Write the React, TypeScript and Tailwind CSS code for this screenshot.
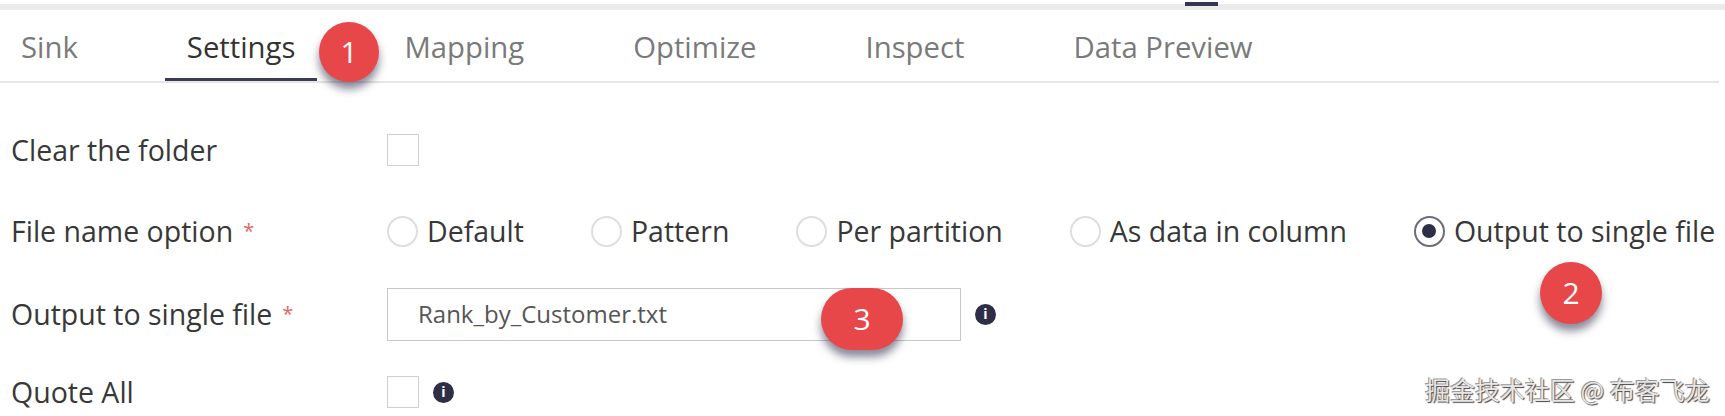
import React from "react";

const font = { fontFamily: '"Open Sans", "Noto Sans", sans-serif' };

function Badge({ n, className }: { n: string; className: string }) {
  return (
    <div
      className={`absolute flex items-center justify-center rounded-full bg-[#e8474a] text-white text-[30px] leading-none shadow-[0_7px_8px_rgba(40,40,70,0.55)] ${className}`}
    >
      {n}
    </div>
  );
}

function Checkbox() {
  return <div className="h-[32px] w-[32px] border border-[#cfcfcf]" />;
}

function Info() {
  return (
    <div className="flex h-[21px] w-[21px] items-center justify-center rounded-full bg-[#2e2f47] text-[14px] font-bold leading-none text-white">
      i
    </div>
  );
}

function Radio({ label, checked }: { label: string; checked?: boolean }) {
  return (
    <div className="flex items-center gap-[9px]">
      <div
        className={`flex h-[31px] w-[31px] items-center justify-center rounded-full border-2 ${
          checked ? "border-[#6b6b7b]" : "border-[#dedede]"
        }`}
      >
        {checked && <div className="h-[14px] w-[14px] rounded-full bg-[#2e2f47]" />}
      </div>
      <span className="whitespace-nowrap">{label}</span>
    </div>
  );
}

function Row({ label, required, h, children }: { label: string; required?: boolean; h: string; children?: React.ReactNode }) {
  return (
    <div className={`flex items-center ${h}`}>
      <div className="w-[387px] shrink-0 pl-[11px]">
        {label}
        {required && <span className="relative top-[-4px] ml-[10px] text-[20px] text-[#e06666]">*</span>}
      </div>
      {children}
    </div>
  );
}

export default function App() {
  const tabs = ["Sink", "Settings", "Mapping", "Optimize", "Inspect", "Data Preview"];
  return (
    <div className="relative h-[416px] w-[1725px] overflow-hidden bg-white text-[28.5px] text-[#383838]" style={font}>
      <div className="relative mt-[4px] h-[6px] bg-[#ebebeb]">
        <div className="absolute left-[1185px] top-[-2px] h-[4px] w-[33px] bg-[#35364f]" />
      </div>
      <div className="mr-[6px] flex h-[73px] items-stretch border-b-2 border-[#e6e6e6] text-[29.3px]">
        <div className="ml-[-1px] flex items-stretch gap-[65px]">
          {tabs.map((t) => (
            <div
              key={t}
              className={`flex items-center px-[22px] pt-[8px] ${
                t === "Settings" ? "border-b-[3px] border-[#3a3b58] text-[#333]" : "border-b-[3px] border-transparent text-[#7a7a7a]"
              }`}
            >
              {t}
            </div>
          ))}
        </div>
      </div>
      <div className="pt-[27px]">
        <Row label="Clear the folder" h="h-[80px]">
          <Checkbox />
        </Row>
        <Row label="File name option" required h="h-[82px]">
          <div className="flex items-center gap-[67px]">
            <Radio label="Default" />
            <Radio label="Pattern" />
            <Radio label="Per partition" />
            <Radio label="As data in column" />
            <Radio label="Output to single file" checked />
          </div>
        </Row>
        <Row label="Output to single file" required h="h-[84px]">
          <div className="flex h-[53px] w-[574px] items-center border border-[#c8c8c8] pl-[30px] text-[24px] text-[#555]">
            Rank_by_Customer.txt
          </div>
          <div className="ml-[14px]">
            <Info />
          </div>
        </Row>
        <Row label="Quote All" h="h-[72px]">
          <Checkbox />
          <div className="ml-[14px]">
            <Info />
          </div>
        </Row>
      </div>
      <Badge n="1" className="left-[319px] top-[22px] h-[60px] w-[60px]" />
      <Badge n="2" className="left-[1540px] top-[262px] h-[62px] w-[62px]" />
      <Badge n="3" className="left-[821px] top-[288px] h-[62px] w-[82px]" />
      <div
        className="absolute left-[1425px] top-[371px] whitespace-nowrap text-[25px] text-[#e6e6e6] [text-shadow:1px_1px_1px_#444,-1px_-1px_0_#999]"
        style={{ fontFamily: '"Noto Sans CJK SC", sans-serif' }}
      >
        掘金技术社区 @ 布客飞龙
      </div>
    </div>
  );
}
